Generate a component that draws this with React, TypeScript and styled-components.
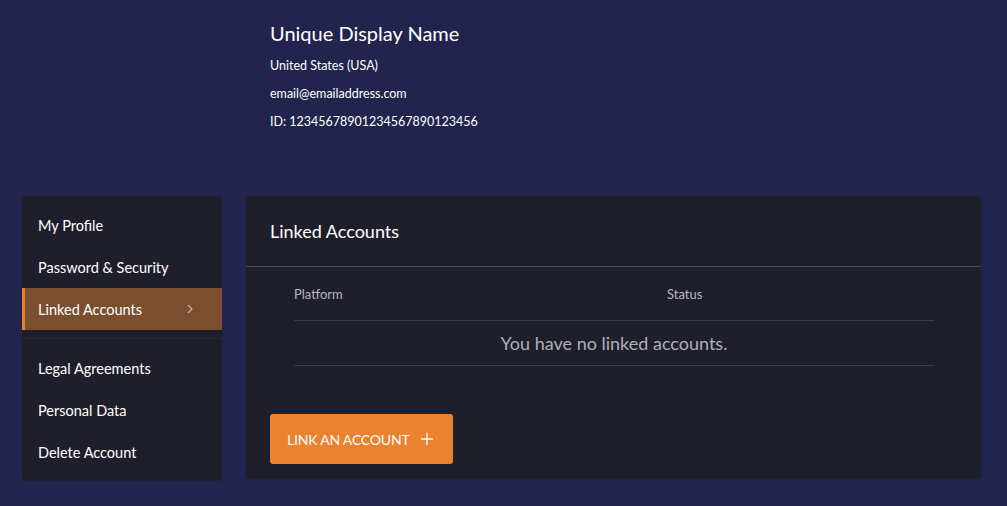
import styled, { createGlobalStyle } from "styled-components";

const GlobalStyle = createGlobalStyle`
  html, body {
    margin: 0;
    padding: 0;
    background: #22244d;
  }
  body {
    font-family: Lato, "Liberation Sans", sans-serif;
    color: #ffffff;
  }
  * { box-sizing: border-box; }
`;

const Page = styled.div`
  width: 1007px;
  height: 506px;
  padding: 0 26px 0 22px;
  overflow: hidden;
`;

const Header = styled.div`
  padding: 20px 0 0 248px;
  height: 196px;
`;

const DisplayName = styled.h1`
  margin: 0 0 6px;
  font-size: 20px;
  font-weight: 400;
  line-height: 26px;
`;

const InfoLine = styled.div`
  font-size: 12.5px;
  line-height: 28px;
`;

const Body = styled.div`
  display: flex;
  gap: 24px;
  align-items: flex-start;
`;

const Sidebar = styled.nav`
  width: 200px;
  background: #1f1f2b;
  border-radius: 4px;
  padding: 8px 0;
`;

const NavItem = styled.div<{ $active?: boolean }>`
  height: 42px;
  display: flex;
  align-items: center;
  justify-content: space-between;
  padding: 0 28px 0 ${(p) => (p.$active ? 13 : 16)}px;
  font-size: 14.5px;
  color: #ffffff;
  background: ${(p) => (p.$active ? "#7a4e2f" : "transparent")};
  border-left: ${(p) => (p.$active ? "3px solid #e8812f" : "none")};
`;

const NavDivider = styled.div`
  height: 1px;
  background: #2a2a36;
  margin: 8px 0;
`;

const Card = styled.section`
  flex: 1;
  height: 283px;
  background: #1f1f2b;
  border-radius: 4px;
`;

const CardTitle = styled.h2`
  margin: 0;
  height: 71px;
  padding: 0 24px;
  display: flex;
  align-items: center;
  font-size: 18px;
  font-weight: 400;
  border-bottom: 1px solid #4a4a52;
`;

const Table = styled.div`
  margin: 0 47px 0 48px;
`;

const Row = styled.div<{ $head?: boolean }>`
  display: grid;
  grid-template-columns: 373px 1fr;
  height: ${(p) => (p.$head ? 54 : 45)}px;
  align-items: center;
  border-bottom: 1px solid #3c3c44;
  font-size: ${(p) => (p.$head ? 13 : 18)}px;
  color: ${(p) => (p.$head ? "#b4b6c4" : "#aeb0bb")};
`;

const EmptyCell = styled.div`
  grid-column: 1 / -1;
  text-align: center;
`;

const Actions = styled.div`
  padding: 48px 24px 0;
`;

const LinkButton = styled.button`
  display: inline-flex;
  align-items: center;
  gap: 12px;
  height: 50px;
  padding: 0 20px 0 17px;
  background: #ea8230;
  border: none;
  border-radius: 3px;
  color: #ffffff;
  font-family: inherit;
  font-size: 14px;
  letter-spacing: -0.2px;
  cursor: pointer;
`;

const Chevron = () => (
  <svg width="8" height="12" viewBox="0 0 8 12" fill="none">
    <path d="M2 2l4 4-4 4" stroke="#c9b09a" strokeWidth="1.3" />
  </svg>
);

const Plus = () => (
  <svg width="12" height="12" viewBox="0 0 12 12" fill="none">
    <path d="M6 0v12M0 6h12" stroke="#ffffff" strokeWidth="1.4" />
  </svg>
);

const topItems = ["My Profile", "Password & Security", "Linked Accounts"];
const bottomItems = ["Legal Agreements", "Personal Data", "Delete Account"];

export default function App() {
  return (
    <>
      <GlobalStyle />
      <Page>
        <Header>
          <DisplayName>Unique Display Name</DisplayName>
          <InfoLine>United States (USA)</InfoLine>
          <InfoLine>email@emailaddress.com</InfoLine>
          <InfoLine>ID: 12345678901234567890123456</InfoLine>
        </Header>
        <Body>
          <Sidebar>
            {topItems.map((item) => (
              <NavItem key={item} $active={item === "Linked Accounts"}>
                {item}
                {item === "Linked Accounts" && <Chevron />}
              </NavItem>
            ))}
            <NavDivider />
            {bottomItems.map((item) => (
              <NavItem key={item}>{item}</NavItem>
            ))}
          </Sidebar>
          <Card>
            <CardTitle>Linked Accounts</CardTitle>
            <Table>
              <Row $head>
                <div>Platform</div>
                <div>Status</div>
              </Row>
              <Row>
                <EmptyCell>You have no linked accounts.</EmptyCell>
              </Row>
            </Table>
            <Actions>
              <LinkButton>
                LINK AN ACCOUNT
                <Plus />
              </LinkButton>
            </Actions>
          </Card>
        </Body>
      </Page>
    </>
  );
}
